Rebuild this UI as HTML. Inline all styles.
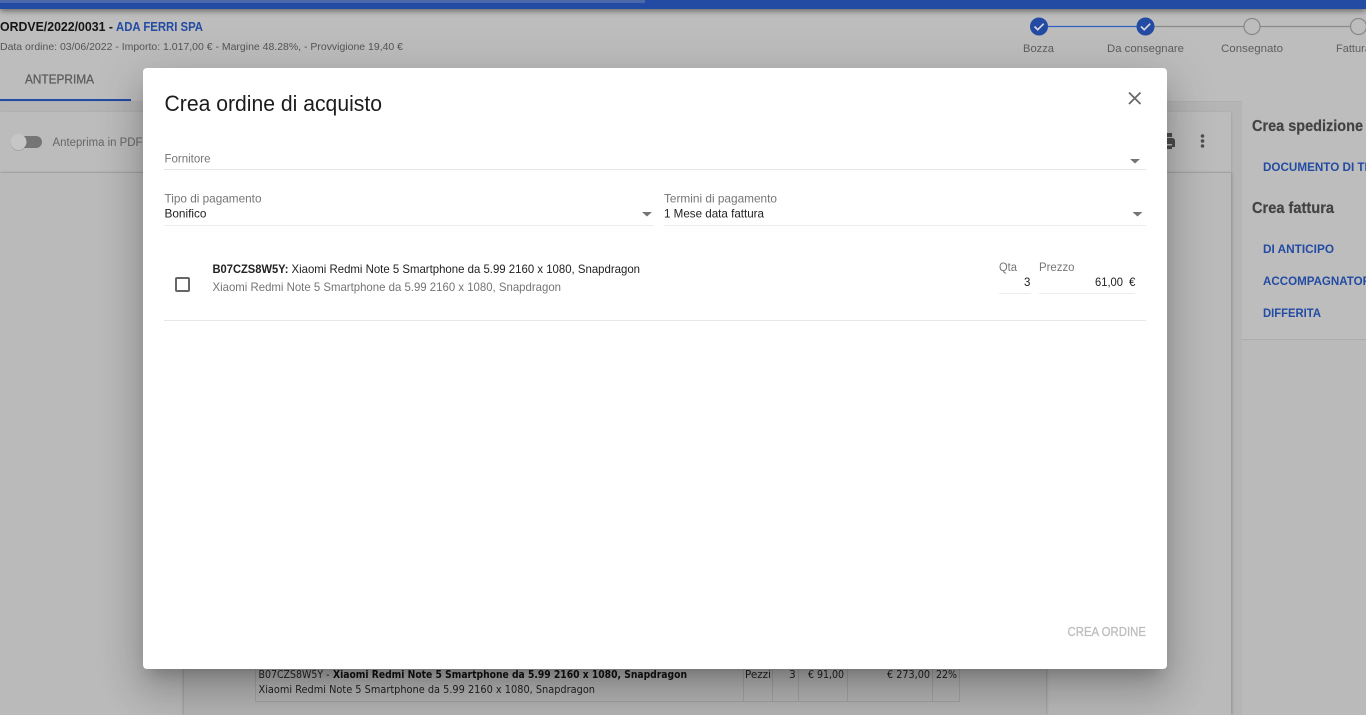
<!DOCTYPE html>
<html lang="it">
<head>
<meta charset="utf-8">
<title>Crea ordine di acquisto</title>
<style>
html,body{margin:0;padding:0;width:1366px;height:715px;overflow:hidden;background:#bdbdbd}
#p{position:absolute;left:0;top:0;width:1366px;height:715px;overflow:hidden;filter:blur(.35px)}
#p div{position:absolute}
svg{position:absolute;left:0;top:0}
text{font-family:"Liberation Sans",sans-serif;white-space:pre}
.b{font-weight:bold}
</style>
</head>
<body>
<div id="p">
<!-- background -->
<div style="left:0;top:0;width:1366px;height:9px;background:#234ba3;box-shadow:0 2px 6px rgba(0,0,0,.45)"></div>
<div style="left:0;top:0;width:645px;height:3px;background:#4a69aa"></div>
<div style="left:0;top:101px;width:1366px;height:614px;background:#b5b5b5;border-top:1px solid #b0b0b0"></div>
<div style="left:0;top:99px;width:131px;height:2px;background:#234ba3"></div>
<div style="left:0;top:112px;width:1231px;height:60px;background:#bcbcbc;border-bottom:1px solid #b0b0b0;box-shadow:0 1px 3px rgba(0,0,0,.15)"></div>
<div style="left:0;top:173px;width:1231px;height:542px;background:#bababa;box-shadow:1px 0 3px rgba(0,0,0,.2)"></div>
<div style="left:184px;top:600px;width:862px;height:115px;background:#b4b4b4;box-shadow:0 0 3px rgba(0,0,0,.3)"></div>
<div style="left:1242px;top:101px;width:124px;height:238px;background:#bdbdbd;border-bottom:1px solid #adadad"></div>
<div style="left:1242px;top:340px;width:124px;height:375px;background:#bababa"></div>
<!-- table behind dialog -->
<div style="left:255px;top:660px;width:705px;height:42px;border:1px solid #a2a2a2;border-top:0;box-sizing:border-box"></div>
<div style="left:743px;top:660px;width:1px;height:41px;background:#a2a2a2"></div>
<div style="left:772px;top:660px;width:1px;height:41px;background:#a2a2a2"></div>
<div style="left:798px;top:660px;width:1px;height:41px;background:#a2a2a2"></div>
<div style="left:847px;top:660px;width:1px;height:41px;background:#a2a2a2"></div>
<div style="left:932px;top:660px;width:1px;height:41px;background:#a2a2a2"></div>
<svg width="1366" height="715" viewBox="0 0 1366 715">
 <text x="0" y="31" class="b" font-size="12.5" fill="#151515" textLength="113" lengthAdjust="spacingAndGlyphs">ORDVE/2022/0031 -</text>
 <text x="116" y="31" class="b" font-size="12.5" fill="#234ba3" textLength="87" lengthAdjust="spacingAndGlyphs">ADA FERRI SPA</text>
 <text x="0" y="50" font-size="10.5" fill="#555" textLength="403" lengthAdjust="spacingAndGlyphs">Data ordine: 03/06/2022 - Importo: 1.017,00 € - Margine 48.28%, - Provvigione 19,40 €</text>
 <text x="25" y="83.5" font-size="12.5" fill="#5e5e5e" textLength="69" lengthAdjust="spacingAndGlyphs" stroke="#5e5e5e" stroke-width=".3">ANTEPRIMA</text>
 <!-- stepper -->
 <line x1="1047" y1="26.5" x2="1137" y2="26.5" stroke="#2f5fc0" stroke-width="1.3"/>
 <line x1="1154" y1="26.5" x2="1244" y2="26.5" stroke="#8a8a8a" stroke-width="1.2"/>
 <line x1="1260" y1="26.5" x2="1350" y2="26.5" stroke="#8a8a8a" stroke-width="1.2"/>
 <circle cx="1039" cy="26.5" r="9" fill="#234ba3"/>
 <path d="M1034.5 26.5l3.2 3.2 6-6" fill="none" stroke="#d8d8d8" stroke-width="1.7"/>
 <circle cx="1145.5" cy="26.5" r="9" fill="#234ba3"/>
 <path d="M1141 26.5l3.2 3.2 6-6" fill="none" stroke="#d8d8d8" stroke-width="1.7"/>
 <circle cx="1252" cy="26.5" r="8" fill="none" stroke="#8a8a8a" stroke-width="1.3"/>
 <circle cx="1358.5" cy="26.5" r="8" fill="none" stroke="#8a8a8a" stroke-width="1.3"/>
 <text x="1023" y="52" font-size="10.8" fill="#5e5e5e" textLength="31" lengthAdjust="spacingAndGlyphs">Bozza</text>
 <text x="1107" y="52" font-size="10.8" fill="#5e5e5e" textLength="77" lengthAdjust="spacingAndGlyphs">Da consegnare</text>
 <text x="1221" y="52" font-size="10.8" fill="#5e5e5e" textLength="62" lengthAdjust="spacingAndGlyphs">Consegnato</text>
 <text x="1336" y="52" font-size="11" fill="#5e5e5e">Fatturato</text>
 <!-- toggle -->
 <rect x="19" y="136" width="23" height="12" rx="6" fill="#757575"/>
 <circle cx="18.5" cy="143" r="8" fill="#000" opacity=".12"/>
 <circle cx="18.5" cy="142" r="8" fill="#c6c6c6"/>
 <text x="52.500" y="146" font-size="11.500" fill="#666" textLength="90" lengthAdjust="spacingAndGlyphs">Anteprima in PDF</text>
 <!-- toolbar icons -->
 <path d="M1163 133h9v4h-9zM1161 138h11c1.500 0 3 1 3 2.500v6.500h-3v-3h-7v5h-4z" fill="#4d4d4d"/>
 <rect x="1166" y="145.500" width="6" height="3.500" fill="#4d4d4d"/>
 <circle cx="1202.500" cy="136" r="1.800" fill="#505050"/>
 <circle cx="1202.500" cy="141" r="1.800" fill="#505050"/>
 <circle cx="1202.500" cy="146" r="1.800" fill="#505050"/>
 <!-- right panel -->
 <text x="1252" y="131" class="b" font-size="15.500" fill="#434343" stroke="#434343" stroke-width=".2" textLength="111" lengthAdjust="spacingAndGlyphs">Crea spedizione</text>
 <text x="1263" y="171" class="b" font-size="12.300" fill="#234ba3" textLength="110" lengthAdjust="spacingAndGlyphs">DOCUMENTO DI TR</text>
 <text x="1252" y="213" class="b" font-size="15.500" fill="#434343" stroke="#434343" stroke-width=".2" textLength="82" lengthAdjust="spacingAndGlyphs">Crea fattura</text>
 <text x="1263" y="253" class="b" font-size="12.300" fill="#234ba3" textLength="71" lengthAdjust="spacingAndGlyphs">DI ANTICIPO</text>
 <text x="1263" y="285" class="b" font-size="12.300" fill="#234ba3" textLength="108" lengthAdjust="spacingAndGlyphs">ACCOMPAGNATOR</text>
 <text x="1263" y="317" class="b" font-size="12.300" fill="#234ba3" textLength="58" lengthAdjust="spacingAndGlyphs">DIFFERITA</text>
 <!-- document table text -->
 <g>
 <text x="258.500" y="678" font-size="10.500" fill="#222" textLength="71" lengthAdjust="spacingAndGlyphs" style="font-family:'DejaVu Sans',sans-serif">B07CZS8W5Y -</text>
 <text x="333" y="678" font-size="10.500" font-weight="bold" fill="#111" textLength="354" lengthAdjust="spacingAndGlyphs" style="font-family:'DejaVu Sans',sans-serif">Xiaomi Redmi Note 5 Smartphone da 5.99 2160 x 1080, Snapdragon</text>
 <text x="258.500" y="693" font-size="10.500" fill="#222" textLength="336.500" lengthAdjust="spacingAndGlyphs" style="font-family:'DejaVu Sans',sans-serif">Xiaomi Redmi Note 5 Smartphone da 5.99 2160 x 1080, Snapdragon</text>
 <text x="745" y="678" font-size="10.500" fill="#222" textLength="26" lengthAdjust="spacingAndGlyphs" style="font-family:'DejaVu Sans',sans-serif">Pezzi</text>
 <text x="789" y="678" font-size="10.500" fill="#222" style="font-family:'DejaVu Sans',sans-serif">3</text>
 <text x="808" y="678" font-size="10.500" fill="#222" textLength="36" lengthAdjust="spacingAndGlyphs" style="font-family:'DejaVu Sans',sans-serif">€ 91,00</text>
 <text x="887" y="678" font-size="10.500" fill="#222" textLength="43" lengthAdjust="spacingAndGlyphs" style="font-family:'DejaVu Sans',sans-serif">€ 273,00</text>
 <text x="936" y="678" font-size="10.500" fill="#222" textLength="21" lengthAdjust="spacingAndGlyphs" style="font-family:'DejaVu Sans',sans-serif">22%</text>
 </g>
</svg>
<!-- dialog -->
<div style="left:143px;top:68px;width:1024px;height:601px;background:#fff;border-radius:4px;box-shadow:0 11px 15px -7px rgba(0,0,0,.2),0 24px 38px 3px rgba(0,0,0,.14),0 9px 46px 8px rgba(0,0,0,.12)"></div>
<div style="left:164px;top:168.500px;width:982px;height:1px;background:#e6e6e6"></div>
<div style="left:164px;top:224.500px;width:490px;height:1px;background:#ececec"></div>
<div style="left:664px;top:224.500px;width:482px;height:1px;background:#ececec"></div>
<div style="left:999px;top:293px;width:32px;height:1px;background:#ececec"></div>
<div style="left:1039px;top:293px;width:96px;height:1px;background:#ececec"></div>
<div style="left:164px;top:320px;width:982px;height:1px;background:#e6e6e6"></div>
<div style="left:175px;top:277px;width:11px;height:11px;border:2px solid #666;border-radius:2px"></div>
<svg width="1366" height="715" viewBox="0 0 1366 715">
 <text x="164.500" y="111" font-size="22" fill="#1c1c1c" textLength="217.500" lengthAdjust="spacingAndGlyphs">Crea ordine di acquisto</text>
 <path d="M1129 92.500l11.500 11.500M1140.500 92.500l-11.500 11.500" stroke="#6a6a6a" stroke-width="1.800" fill="none"/>
 <text x="164.500" y="162.500" font-size="11.500" fill="#757575" textLength="46" lengthAdjust="spacingAndGlyphs">Fornitore</text>
 <path d="M1130 159h10l-5 4.500z" fill="#757575"/>
 <text x="164.500" y="202.500" font-size="11.800" fill="#757575" textLength="97" lengthAdjust="spacingAndGlyphs">Tipo di pagamento</text>
 <text x="164.500" y="217.500" font-size="11.800" fill="#222" textLength="42" lengthAdjust="spacingAndGlyphs">Bonifico</text>
 <path d="M642 212h10l-5 4.500z" fill="#757575"/>
 <text x="664" y="202.500" font-size="11.800" fill="#757575" textLength="113" lengthAdjust="spacingAndGlyphs">Termini di pagamento</text>
 <text x="664" y="217.500" font-size="11.800" fill="#222" textLength="100" lengthAdjust="spacingAndGlyphs">1 Mese data fattura</text>
 <path d="M1132.500 212h10l-5 4.500z" fill="#757575"/>
 <text x="212.500" y="273" class="b" font-size="11.800" fill="#222" textLength="76" lengthAdjust="spacingAndGlyphs">B07CZS8W5Y:</text>
 <text x="291.500" y="273" font-size="11.800" fill="#222" textLength="348.500" lengthAdjust="spacingAndGlyphs">Xiaomi Redmi Note 5 Smartphone da 5.99 2160 x 1080, Snapdragon</text>
 <text x="212.500" y="291" font-size="11.800" fill="#757575" textLength="348.500" lengthAdjust="spacingAndGlyphs">Xiaomi Redmi Note 5 Smartphone da 5.99 2160 x 1080, Snapdragon</text>
 <text x="999" y="271" font-size="11.500" fill="#757575" textLength="18" lengthAdjust="spacingAndGlyphs">Qta</text>
 <text x="1039" y="271" font-size="11.500" fill="#757575" textLength="35.500" lengthAdjust="spacingAndGlyphs">Prezzo</text>
 <text x="1024" y="286" font-size="11.500" fill="#222">3</text>
 <text x="1095" y="286" font-size="11.500" fill="#222" textLength="28" lengthAdjust="spacingAndGlyphs">61,00</text>
 <text x="1129" y="286" font-size="11.500" fill="#222">€</text>
 <text x="1067.500" y="636" font-size="12.500" fill="#bdbdbd" stroke="#bdbdbd" stroke-width=".3" textLength="78.500" lengthAdjust="spacingAndGlyphs">CREA ORDINE</text>
</svg>
</div>
</body>
</html>
